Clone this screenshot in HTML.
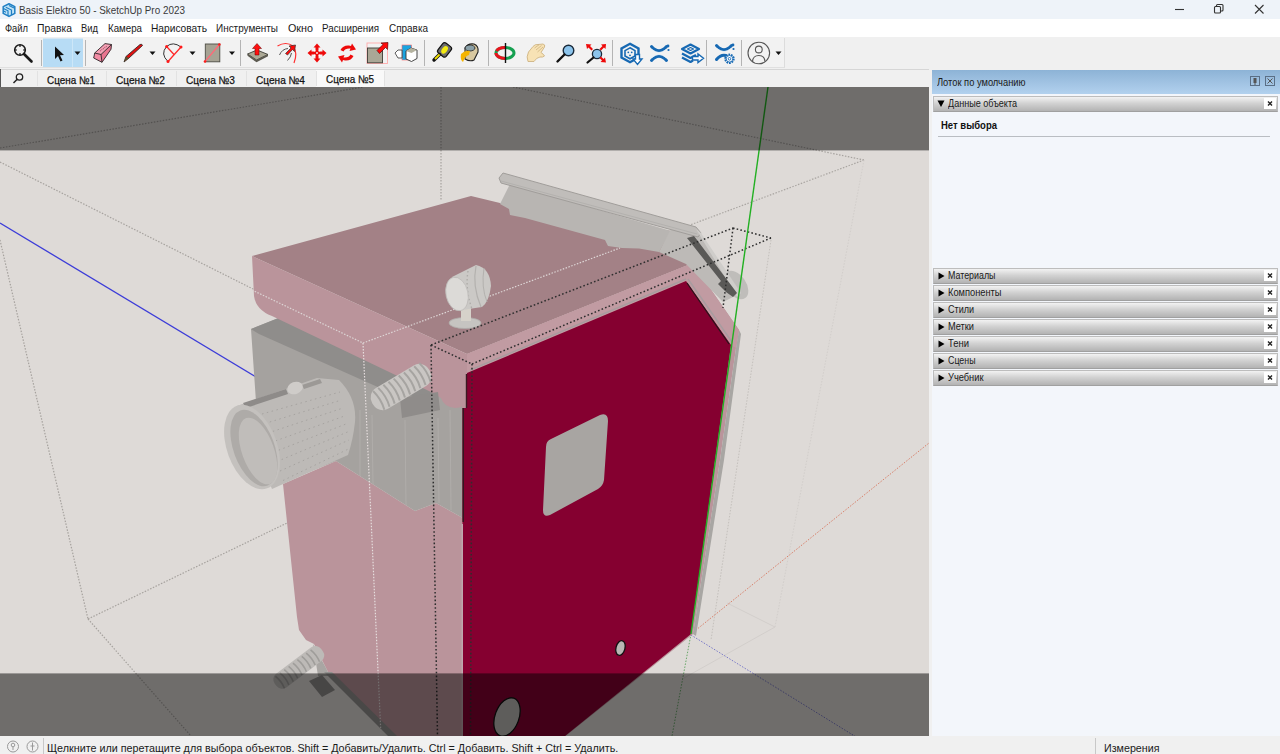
<!DOCTYPE html><html><head><meta charset="utf-8"><style>
*{box-sizing:border-box;margin:0;padding:0}
html,body{width:1280px;height:754px;overflow:hidden;background:#f0f0f0;font-family:"Liberation Sans",sans-serif;font-size:12px;color:#000;position:relative}
.a{position:absolute}
</style></head><body><div class="a" style="left:0;top:0;width:1280px;height:19px;background:#eef3f9"></div><div style="position:absolute;left:19px;top:4.69px;font-size:11px;line-height:11px;white-space:nowrap;color:#3a3a3a;font-weight:normal;transform-origin:0 0;transform:scaleX(0.8984);">Basis Elektro 50 - SketchUp Pro 2023</div><svg class="a" style="left:1140px;top:0" width="140" height="19"><g stroke="#333" stroke-width="1.1" fill="none"><line x1="35" y1="9.5" x2="44" y2="9.5"/><rect x="74.5" y="6.5" width="6" height="6.5" rx="1"/><path d="M76.5 6.5 V5.5 Q76.5 4.5 77.5 4.5 H82 Q83 4.5 83 5.5 V10 Q83 11 82 11 H80.5"/><path d="M115 5 L123.5 13.5 M123.5 5 L115 13.5"/></g></svg><svg class="a" style="left:1px;top:2px" width="16" height="16" viewBox="0 0 16 16"><path d="M8 1.8 L13.8 4.6 V11.4 L8 14.4 L2.2 11.4 V4.6 Z" fill="#bfe3f7" stroke="#1f7fc4" stroke-width="1.5" stroke-linejoin="round"/><path d="M2.5 6.5 L7 8.8 V14 M2.5 9 L5 10.3 M4.8 5.2 L10.5 8 V13 M8 3.5 L13 6" stroke="#1f7fc4" stroke-width="1.2" fill="none"/></svg><div class="a" style="left:0;top:19px;width:1280px;height:18px;background:#fff"></div><div style="position:absolute;left:5px;top:23.19px;font-size:11px;line-height:11px;white-space:nowrap;color:#1a1a1a;font-weight:normal;transform-origin:0 0;transform:scaleX(0.8504);">Файл</div><div style="position:absolute;left:37px;top:23.19px;font-size:11px;line-height:11px;white-space:nowrap;color:#1a1a1a;font-weight:normal;transform-origin:0 0;transform:scaleX(0.9416);">Правка</div><div style="position:absolute;left:81px;top:23.19px;font-size:11px;line-height:11px;white-space:nowrap;color:#1a1a1a;font-weight:normal;transform-origin:0 0;transform:scaleX(0.8540);">Вид</div><div style="position:absolute;left:108px;top:23.19px;font-size:11px;line-height:11px;white-space:nowrap;color:#1a1a1a;font-weight:normal;transform-origin:0 0;transform:scaleX(0.8838);">Камера</div><div style="position:absolute;left:151px;top:23.19px;font-size:11px;line-height:11px;white-space:nowrap;color:#1a1a1a;font-weight:normal;transform-origin:0 0;transform:scaleX(0.9263);">Нарисовать</div><div style="position:absolute;left:216px;top:23.19px;font-size:11px;line-height:11px;white-space:nowrap;color:#1a1a1a;font-weight:normal;transform-origin:0 0;transform:scaleX(0.9039);">Инструменты</div><div style="position:absolute;left:288px;top:23.19px;font-size:11px;line-height:11px;white-space:nowrap;color:#1a1a1a;font-weight:normal;transform-origin:0 0;transform:scaleX(0.9774);">Окно</div><div style="position:absolute;left:322px;top:23.19px;font-size:11px;line-height:11px;white-space:nowrap;color:#1a1a1a;font-weight:normal;transform-origin:0 0;transform:scaleX(0.8906);">Расширения</div><div style="position:absolute;left:389px;top:23.19px;font-size:11px;line-height:11px;white-space:nowrap;color:#1a1a1a;font-weight:normal;transform-origin:0 0;transform:scaleX(0.9037);">Справка</div><div class="a" style="left:0;top:37px;width:1280px;height:32px;background:#f0f0f0"></div><div class="a" style="left:0;top:38px;width:785px;height:30px;background:#f2f2f2;border-right:1px solid #dcdcdc;border-bottom:1px solid #e0e0e0"></div><div class="a" style="left:0;top:68.5px;width:1280px;height:1px;background:#d6d6d6"></div><div class="a" style="left:0;top:69.5px;width:930px;height:17.5px;background:#f0f0f0"></div><div class="a" style="left:0;top:69px;width:1px;height:18px;background:#555"></div><div class="a" style="left:316px;top:70px;width:68px;height:17px;background:#f9f9f9"></div><div class="a" style="left:37px;top:71px;width:1px;height:15px;background:#e2e2e2"></div><div class="a" style="left:106px;top:71px;width:1px;height:15px;background:#e2e2e2"></div><div class="a" style="left:176px;top:71px;width:1px;height:15px;background:#e2e2e2"></div><div class="a" style="left:246px;top:71px;width:1px;height:15px;background:#e2e2e2"></div><div class="a" style="left:316px;top:71px;width:1px;height:15px;background:#e2e2e2"></div><div class="a" style="left:384px;top:71px;width:1px;height:15px;background:#e2e2e2"></div><div style="position:absolute;left:47px;top:74.69px;font-size:11px;line-height:11px;white-space:nowrap;color:#111;font-weight:normal;transform-origin:0 0;transform:scaleX(0.8985);-webkit-text-stroke:0.25px #111;">Сцена №1</div><div style="position:absolute;left:116px;top:74.69px;font-size:11px;line-height:11px;white-space:nowrap;color:#111;font-weight:normal;transform-origin:0 0;transform:scaleX(0.9172);-webkit-text-stroke:0.25px #111;">Сцена №2</div><div style="position:absolute;left:186px;top:74.69px;font-size:11px;line-height:11px;white-space:nowrap;color:#111;font-weight:normal;transform-origin:0 0;transform:scaleX(0.9172);-webkit-text-stroke:0.25px #111;">Сцена №3</div><div style="position:absolute;left:256px;top:74.69px;font-size:11px;line-height:11px;white-space:nowrap;color:#111;font-weight:normal;transform-origin:0 0;transform:scaleX(0.9172);-webkit-text-stroke:0.25px #111;">Сцена №4</div><div style="position:absolute;left:326px;top:73.69px;font-size:11px;line-height:11px;white-space:nowrap;color:#111;font-weight:normal;transform-origin:0 0;transform:scaleX(0.8985);-webkit-text-stroke:0.25px #111;">Сцена №5</div><svg class="a" style="left:10px;top:72px" width="16" height="14"><circle cx="9.5" cy="5" r="3.2" stroke="#222" stroke-width="1.3" fill="none"/><line x1="7.2" y1="7.3" x2="3.5" y2="11" stroke="#222" stroke-width="1.5"/></svg><div class="a" style="left:0;top:87px;width:929px;height:649px;overflow:hidden;background:#dedad7"><svg width="929" height="649" viewBox="0 87 929 649" style="position:absolute;left:0;top:0"><line x1="0" y1="148" x2="363" y2="87" stroke="#a6a29e" stroke-width="1.2" stroke-dasharray="1.5,1.5" /><line x1="0" y1="162" x2="255" y2="290" stroke="#a6a29e" stroke-width="1.2" stroke-dasharray="1.5,1.5" /><line x1="0" y1="240" x2="88" y2="619" stroke="#a6a29e" stroke-width="1.2" stroke-dasharray="1.5,1.5" /><line x1="88" y1="619" x2="191" y2="736" stroke="#a6a29e" stroke-width="1.2" stroke-dasharray="1.5,1.5" /><line x1="88" y1="619" x2="287" y2="523" stroke="#a6a29e" stroke-width="1.2" stroke-dasharray="1.5,1.5" /><line x1="441" y1="87" x2="441" y2="200" stroke="#a6a29e" stroke-width="1.2" stroke-dasharray="1.5,1.5" /><line x1="513" y1="87" x2="864" y2="160" stroke="#a6a29e" stroke-width="1.2" stroke-dasharray="1.5,1.5" /><line x1="864" y1="160" x2="690" y2="225" stroke="#aaa6a2" stroke-width="1.2" stroke-dasharray="1.5,1.5" /><line x1="864" y1="160" x2="775" y2="627" stroke="#d2cecb" stroke-width="1" stroke-dasharray="1.5,1.5" /><line x1="775" y1="627" x2="684" y2="678" stroke="#d2cecb" stroke-width="1" /><line x1="727" y1="603" x2="775" y2="627" stroke="#d2cecb" stroke-width="1" /><line x1="771" y1="240" x2="711" y2="640" stroke="#c4c0bc" stroke-width="1" stroke-dasharray="1.5,1.5" /><line x1="0" y1="223" x2="256" y2="377" stroke="#3c3cd8" stroke-width="1.3" /><line x1="691" y1="634" x2="929" y2="443" stroke="#d8806a" stroke-width="1" stroke-dasharray="1.5,1.5" /><line x1="691" y1="635" x2="861" y2="740" stroke="#7a7ac8" stroke-width="1" stroke-dasharray="1.5,1.5" /><line x1="691" y1="634" x2="672" y2="736" stroke="#6aa86a" stroke-width="1" stroke-dasharray="1.5,1.5" /><polygon points="283,484 336,461 415,511 436,503 461,517 464,520 464,736 395,736 330,676 326,668 314,644 306,640 299,630 297,617 291,560" fill="#ba949b" /><polygon points="313,644 326,668 330,676 318,676" fill="#a9a6a3" /><g transform="rotate(-37 298 668)"><rect x="270" y="659.5" width="58" height="17" rx="7" fill="#bdbab7"/><path d="M275.0,661 q2,7.5 0,15" stroke="#9f9d9a" stroke-width="1.6" fill="none"/><path d="M280.5,661 q2,7.5 0,15" stroke="#9f9d9a" stroke-width="1.6" fill="none"/><path d="M286.0,661 q2,7.5 0,15" stroke="#9f9d9a" stroke-width="1.6" fill="none"/><path d="M291.5,661 q2,7.5 0,15" stroke="#9f9d9a" stroke-width="1.6" fill="none"/><path d="M297.0,661 q2,7.5 0,15" stroke="#9f9d9a" stroke-width="1.6" fill="none"/><path d="M302.5,661 q2,7.5 0,15" stroke="#9f9d9a" stroke-width="1.6" fill="none"/><path d="M308.0,661 q2,7.5 0,15" stroke="#9f9d9a" stroke-width="1.6" fill="none"/><path d="M313.5,661 q2,7.5 0,15" stroke="#9f9d9a" stroke-width="1.6" fill="none"/><path d="M319.0,661 q2,7.5 0,15" stroke="#9f9d9a" stroke-width="1.6" fill="none"/></g><polygon points="324,672 332,672 397,736 388,736" fill="#92908e" /><polygon points="309,681 322,675 335,690 322,697" fill="#8e8c8a" /><polygon points="251,329 281,317 440,380 464,380 464,522 461,517 436,503 415,511 336,461 284,482 256,402" fill="#a5a29f" /><line x1="360" y1="410" x2="360" y2="476" stroke="#b0adaa" stroke-width="1" /><line x1="372" y1="415" x2="373" y2="484" stroke="#b0adaa" stroke-width="1" /><line x1="405" y1="420" x2="406" y2="505" stroke="#b0adaa" stroke-width="1" /><line x1="438" y1="418" x2="439" y2="503" stroke="#b0adaa" stroke-width="1" /><line x1="450" y1="410" x2="451" y2="510" stroke="#b0adaa" stroke-width="1" /><polygon points="251,329 281,317 437,386 437,402 380,388 259,334" fill="#8f8d8b" /><g><path d="M237,406 L317,378 L339,380 Q357,398 355,422 Q353,440 348,455 L272,489 Z" fill="#bdbab7"/><line x1="262" y1="414.0" x2="340.0" y2="392" stroke="#a6a3a0" stroke-width="1" stroke-dasharray="1.5,3.5"/><line x1="265" y1="423.5" x2="341.5" y2="400" stroke="#a6a3a0" stroke-width="1" stroke-dasharray="1.5,3.5"/><line x1="268" y1="433.0" x2="343.0" y2="408" stroke="#a6a3a0" stroke-width="1" stroke-dasharray="1.5,3.5"/><line x1="271" y1="442.5" x2="344.5" y2="416" stroke="#a6a3a0" stroke-width="1" stroke-dasharray="1.5,3.5"/><line x1="274" y1="452.0" x2="346.0" y2="424" stroke="#a6a3a0" stroke-width="1" stroke-dasharray="1.5,3.5"/><line x1="277" y1="461.5" x2="347.5" y2="432" stroke="#a6a3a0" stroke-width="1" stroke-dasharray="1.5,3.5"/><line x1="280" y1="471.0" x2="349.0" y2="440" stroke="#a6a3a0" stroke-width="1" stroke-dasharray="1.5,3.5"/><line x1="283" y1="480.5" x2="350.5" y2="448" stroke="#a6a3a0" stroke-width="1" stroke-dasharray="1.5,3.5"/><path d="M243,403 L286,389 L288,394 L246,408 Z" fill="#8e8b89"/><path d="M302,385 L320,379 L322,383 L304,389 Z" fill="#9c9996"/><ellipse cx="295" cy="388" rx="8" ry="6" fill="#cfccc9" transform="rotate(-20 295 388)"/><ellipse cx="252" cy="447" rx="25" ry="44" fill="#c4c1be" transform="rotate(-20 252 447)"/><ellipse cx="254" cy="448" rx="20.5" ry="40" fill="#aeaba8" transform="rotate(-20 254 448)"/><ellipse cx="258" cy="451" rx="16" ry="35" fill="#c0bdba" transform="rotate(-20 258 451)"/></g><polygon points="252,256 471,196 500,203 671,231 688,265 467,354" fill="#a38186" /><path d="M252,256 L467,354 L467,398 Q465,408 455,408 Q444,407 441,398 L431,392 L272,316 Q256,310 254,296 Z" fill="#ba949b" /><polygon points="400,398 438,392 440,410 402,418" fill="#8f8c8a" /><g transform="rotate(-31 401 387)"><rect x="368" y="375" width="66" height="24" rx="11" fill="#c9c6c3"/><path d="M375,376 q3,11 0,22" stroke="#a6a4a1" stroke-width="2" fill="none"/><path d="M381,376 q3,11 0,22" stroke="#a6a4a1" stroke-width="2" fill="none"/><path d="M387,376 q3,11 0,22" stroke="#a6a4a1" stroke-width="2" fill="none"/><path d="M393,376 q3,11 0,22" stroke="#a6a4a1" stroke-width="2" fill="none"/><path d="M399,376 q3,11 0,22" stroke="#a6a4a1" stroke-width="2" fill="none"/><path d="M405,376 q3,11 0,22" stroke="#a6a4a1" stroke-width="2" fill="none"/><path d="M411,376 q3,11 0,22" stroke="#a6a4a1" stroke-width="2" fill="none"/><path d="M417,376 q3,11 0,22" stroke="#a6a4a1" stroke-width="2" fill="none"/><path d="M423,376 q3,11 0,22" stroke="#a6a4a1" stroke-width="2" fill="none"/><path d="M429,376 q3,11 0,22" stroke="#a6a4a1" stroke-width="2" fill="none"/></g><polygon points="467,354 688,265 696,268 739,330 736,348 720,460 693,634 565,736.5 462,737 462,370" fill="#ba949b" /><polygon points="467,354 688,265 696,268 739,330 736,348 731,345 686,281 467,373" fill="#c19ba2" /><line x1="470" y1="370" x2="686" y2="279" stroke="#a89c9f" stroke-width="1.4" /><line x1="688" y1="279" x2="732" y2="342" stroke="#a89c9f" stroke-width="1.4" /><polygon points="739,330 741,334 724,460 696,636 693,634 720,460 736,348" fill="#a8a6a3" /><polygon points="467,373 686,281 731,345 691,634 565,736 462.5,736 462.5,408 467,408" fill="#850030" /><line x1="466.5" y1="374" x2="466.5" y2="408" stroke="#3a1a22" stroke-width="1.4" /><line x1="463.2" y1="408" x2="463.2" y2="522" stroke="#2a1a1e" stroke-width="1.4" /><line x1="462.3" y1="524" x2="462.3" y2="736" stroke="#c9bfc0" stroke-width="1" /><line x1="687" y1="283" x2="729" y2="344" stroke="#2a141a" stroke-width="1.3" /><path d="M551,439 L600,415 Q608,412 608,421 L604,480 Q603,486 598,489 L550,515 Q543,518 543,510 L546,447 Q546,441 551,439 Z" fill="#a8a5a2" /><ellipse cx="620.5" cy="648" rx="4.5" ry="7.5" fill="#b9b7b4" stroke="#111" stroke-width="1.3" transform="rotate(15 620.5 648)"/><ellipse cx="507" cy="717" rx="12" ry="20" fill="#bcbab7" stroke="#111" stroke-width="1.3" transform="rotate(20 507 717)"/><polygon points="510,184 671,231 659,252 639,248.5 622,248 608,246 605,240 525,218 510,215 509,209 500,204" fill="#b8b5b2" /><polygon points="671,229 698,231 739,294 723,302 686,264 659,252" fill="#bdbab7" /><polygon points="499,178 503,173 696,227 701,233 698,237 501,183" fill="#c0bdba" stroke="#a09d9a" stroke-width="1"/><line x1="501" y1="181" x2="697" y2="234" stroke="#b3b1ae" stroke-width="1" /><ellipse cx="736" cy="285" rx="10" ry="16" fill="#bfbdba" transform="rotate(-35 736 285)"/><polygon points="696,229 701,233 741,293 737,297" fill="#cfcdca" /><polygon points="687,238 694,236 737,293 733,297 726,292 718,284 721,281" fill="#5a5957" /><line x1="363" y1="343" x2="381" y2="736" stroke="#e6dede" stroke-width="1.2" stroke-dasharray="1.5,1.5" /><line x1="252" y1="290" x2="363" y2="343" stroke="#ddd5d5" stroke-width="1.2" stroke-dasharray="1.5,1.5" /><line x1="363" y1="343" x2="620" y2="248" stroke="#ddd5d5" stroke-width="1.2" stroke-dasharray="1.5,1.5" /><ellipse cx="465" cy="323" rx="16" ry="5.5" fill="#c6c4c1" stroke="#aeaca9" stroke-width="0.8"/><rect x="461" y="304" width="10" height="17" fill="#d6d2ca"/><path d="M452,277 L476,265 Q490,268 491,286 Q489,302 482,307 L462,310 Z" fill="#cbc9c6"/><path d="M476,266 Q472,286 481,307" stroke="#b3b1ae" stroke-width="1.2" fill="none"/><path d="M484,268 Q481,287 487,302" stroke="#b3b1ae" stroke-width="1" fill="none"/><path d="M468,271 Q465,289 472,309" stroke="#aeaca9" stroke-width="1.4" fill="none" stroke-dasharray="1.5,2.5"/><ellipse cx="457" cy="294" rx="11" ry="17" fill="#dcdad7" stroke="#bdbbb8" stroke-width="0.8" transform="rotate(-12 457 294)"/><line x1="431" y1="345" x2="733" y2="228" stroke="#2e2e2e" stroke-width="1.5" stroke-dasharray="1.6,2.2" /><line x1="472" y1="364" x2="771" y2="238" stroke="#2e2e2e" stroke-width="1.5" stroke-dasharray="1.6,2.2" /><line x1="431" y1="345" x2="472" y2="364" stroke="#2e2e2e" stroke-width="1.5" stroke-dasharray="1.6,2.2" /><line x1="733" y1="228" x2="771" y2="238" stroke="#2e2e2e" stroke-width="1.5" stroke-dasharray="1.6,2.2" /><line x1="733" y1="228" x2="723" y2="308" stroke="#2e2e2e" stroke-width="1.5" stroke-dasharray="1.6,2.2" /><line x1="431" y1="345" x2="437.5" y2="736" stroke="#2e2e2e" stroke-width="1.5" stroke-dasharray="1.6,2.2" /><line x1="472" y1="364" x2="470.5" y2="736" stroke="#2e2e2e" stroke-width="1.5" stroke-dasharray="1.6,2.2" /><line x1="768" y1="87" x2="691" y2="634" stroke="#22b022" stroke-width="1.4" /><rect x="0" y="87" width="929" height="63.4" fill="#000" fill-opacity="0.5"/><rect x="0" y="673.4" width="929" height="62.6" fill="#000" fill-opacity="0.5"/></svg></div><div class="a" style="left:929px;top:69px;width:351px;height:667px;background:#f0f0f0"></div><div class="a" style="left:932px;top:70px;width:348px;height:666px;background:#f3f6fb"></div><div class="a" style="left:932px;top:70px;width:348px;height:24px;background:linear-gradient(#8db3d6,#b2d1ee)"></div><div style="position:absolute;left:937px;top:77.53px;font-size:10px;line-height:10px;white-space:nowrap;color:#1a1a1a;font-weight:normal;transform-origin:0 0;transform:scaleX(0.9320);">Лоток по умолчанию</div><svg class="a" style="left:1249px;top:75px" width="31" height="14"><g fill="none" stroke="#5a6f86" stroke-width="1"><rect x="1.5" y="1.5" width="9" height="9"/><rect x="16.5" y="1.5" width="9" height="9"/></g><rect x="4.5" y="3" width="3" height="5" fill="#555"/><line x1="6" y1="8" x2="6" y2="10" stroke="#555"/><path d="M18.5 3.5 L23.5 8.5 M23.5 3.5 L18.5 8.5" stroke="#555" stroke-width="1"/></svg><div class="a" style="left:933px;top:96px;width:345px;height:16px;background:linear-gradient(#f2f2f2,#d2d2d2 45%,#b3b3b3);border:1px solid #bdbdbd;border-bottom-color:#a0a0a0"></div><svg class="a" style="left:937px;top:100px" width="9" height="8"><path d="M0.5 0.5 H7.5 L4 7 Z" fill="#000"/></svg><div style="position:absolute;left:948px;top:99.03px;font-size:10px;line-height:10px;white-space:nowrap;color:#1a1a1a;font-weight:normal;transform-origin:0 0;transform:scaleX(0.9057);">Данные объекта</div><div class="a" style="left:1264px;top:98px;width:12px;height:11px;background:#fff"></div><svg class="a" style="left:1264px;top:98px" width="12" height="11"><path d="M4 3.5 L8 7.5 M8 3.5 L4 7.5" stroke="#222" stroke-width="1.4"/></svg><div style="position:absolute;left:941px;top:121.03px;font-size:10px;line-height:10px;white-space:nowrap;color:#111;font-weight:bold;transform-origin:0 0;transform:scaleX(0.9497);">Нет выбора</div><div class="a" style="left:938px;top:136px;width:332px;height:1px;background:#b9bdc2"></div><div class="a" style="left:933px;top:268px;width:345px;height:16px;background:linear-gradient(#f2f2f2,#d2d2d2 45%,#b3b3b3);border:1px solid #bdbdbd;border-bottom-color:#a0a0a0"></div><svg class="a" style="left:938px;top:272px" width="8" height="9"><path d="M0.5 0.5 L6.5 4 L0.5 7.5 Z" fill="#000"/></svg><div style="position:absolute;left:948px;top:271.04px;font-size:10px;line-height:10px;white-space:nowrap;color:#1a1a1a;font-weight:normal;transform-origin:0 0;transform:scaleX(0.8871);">Материалы</div><div class="a" style="left:1264px;top:270px;width:12px;height:11px;background:#fff"></div><svg class="a" style="left:1264px;top:270px" width="12" height="11"><path d="M4 3.5 L8 7.5 M8 3.5 L4 7.5" stroke="#222" stroke-width="1.4"/></svg><div class="a" style="left:933px;top:285px;width:345px;height:16px;background:linear-gradient(#f2f2f2,#d2d2d2 45%,#b3b3b3);border:1px solid #bdbdbd;border-bottom-color:#a0a0a0"></div><svg class="a" style="left:938px;top:289px" width="8" height="9"><path d="M0.5 0.5 L6.5 4 L0.5 7.5 Z" fill="#000"/></svg><div style="position:absolute;left:948px;top:288.04px;font-size:10px;line-height:10px;white-space:nowrap;color:#1a1a1a;font-weight:normal;transform-origin:0 0;transform:scaleX(0.9287);">Компоненты</div><div class="a" style="left:1264px;top:287px;width:12px;height:11px;background:#fff"></div><svg class="a" style="left:1264px;top:287px" width="12" height="11"><path d="M4 3.5 L8 7.5 M8 3.5 L4 7.5" stroke="#222" stroke-width="1.4"/></svg><div class="a" style="left:933px;top:302px;width:345px;height:16px;background:linear-gradient(#f2f2f2,#d2d2d2 45%,#b3b3b3);border:1px solid #bdbdbd;border-bottom-color:#a0a0a0"></div><svg class="a" style="left:938px;top:306px" width="8" height="9"><path d="M0.5 0.5 L6.5 4 L0.5 7.5 Z" fill="#000"/></svg><div style="position:absolute;left:948px;top:305.04px;font-size:10px;line-height:10px;white-space:nowrap;color:#1a1a1a;font-weight:normal;transform-origin:0 0;transform:scaleX(0.9024);">Стили</div><div class="a" style="left:1264px;top:304px;width:12px;height:11px;background:#fff"></div><svg class="a" style="left:1264px;top:304px" width="12" height="11"><path d="M4 3.5 L8 7.5 M8 3.5 L4 7.5" stroke="#222" stroke-width="1.4"/></svg><div class="a" style="left:933px;top:319px;width:345px;height:16px;background:linear-gradient(#f2f2f2,#d2d2d2 45%,#b3b3b3);border:1px solid #bdbdbd;border-bottom-color:#a0a0a0"></div><svg class="a" style="left:938px;top:323px" width="8" height="9"><path d="M0.5 0.5 L6.5 4 L0.5 7.5 Z" fill="#000"/></svg><div style="position:absolute;left:948px;top:322.04px;font-size:10px;line-height:10px;white-space:nowrap;color:#1a1a1a;font-weight:normal;transform-origin:0 0;transform:scaleX(0.9214);">Метки</div><div class="a" style="left:1264px;top:321px;width:12px;height:11px;background:#fff"></div><svg class="a" style="left:1264px;top:321px" width="12" height="11"><path d="M4 3.5 L8 7.5 M8 3.5 L4 7.5" stroke="#222" stroke-width="1.4"/></svg><div class="a" style="left:933px;top:336px;width:345px;height:16px;background:linear-gradient(#f2f2f2,#d2d2d2 45%,#b3b3b3);border:1px solid #bdbdbd;border-bottom-color:#a0a0a0"></div><svg class="a" style="left:938px;top:340px" width="8" height="9"><path d="M0.5 0.5 L6.5 4 L0.5 7.5 Z" fill="#000"/></svg><div style="position:absolute;left:948px;top:339.04px;font-size:10px;line-height:10px;white-space:nowrap;color:#1a1a1a;font-weight:normal;transform-origin:0 0;transform:scaleX(0.9451);">Тени</div><div class="a" style="left:1264px;top:338px;width:12px;height:11px;background:#fff"></div><svg class="a" style="left:1264px;top:338px" width="12" height="11"><path d="M4 3.5 L8 7.5 M8 3.5 L4 7.5" stroke="#222" stroke-width="1.4"/></svg><div class="a" style="left:933px;top:353px;width:345px;height:16px;background:linear-gradient(#f2f2f2,#d2d2d2 45%,#b3b3b3);border:1px solid #bdbdbd;border-bottom-color:#a0a0a0"></div><svg class="a" style="left:938px;top:357px" width="8" height="9"><path d="M0.5 0.5 L6.5 4 L0.5 7.5 Z" fill="#000"/></svg><div style="position:absolute;left:948px;top:356.04px;font-size:10px;line-height:10px;white-space:nowrap;color:#1a1a1a;font-weight:normal;transform-origin:0 0;transform:scaleX(0.8840);">Сцены</div><div class="a" style="left:1264px;top:355px;width:12px;height:11px;background:#fff"></div><svg class="a" style="left:1264px;top:355px" width="12" height="11"><path d="M4 3.5 L8 7.5 M8 3.5 L4 7.5" stroke="#222" stroke-width="1.4"/></svg><div class="a" style="left:933px;top:370px;width:345px;height:16px;background:linear-gradient(#f2f2f2,#d2d2d2 45%,#b3b3b3);border:1px solid #bdbdbd;border-bottom-color:#a0a0a0"></div><svg class="a" style="left:938px;top:374px" width="8" height="9"><path d="M0.5 0.5 L6.5 4 L0.5 7.5 Z" fill="#000"/></svg><div style="position:absolute;left:948px;top:373.04px;font-size:10px;line-height:10px;white-space:nowrap;color:#1a1a1a;font-weight:normal;transform-origin:0 0;transform:scaleX(0.9285);">Учебник</div><div class="a" style="left:1264px;top:372px;width:12px;height:11px;background:#fff"></div><svg class="a" style="left:1264px;top:372px" width="12" height="11"><path d="M4 3.5 L8 7.5 M8 3.5 L4 7.5" stroke="#222" stroke-width="1.4"/></svg><div class="a" style="left:0;top:736px;width:1280px;height:18px;background:#f0f0f0"></div><div class="a" style="left:43px;top:738px;width:1px;height:16px;background:#c8c8c8"></div><div class="a" style="left:1095px;top:738px;width:1px;height:16px;background:#c8c8c8"></div><div style="position:absolute;left:47px;top:743.19px;font-size:11px;line-height:11px;white-space:nowrap;color:#1a1a1a;font-weight:normal;transform-origin:0 0;transform:scaleX(0.9785);">Щелкните или перетащите для выбора объектов. Shift = Добавить/Удалить. Ctrl = Добавить. Shift + Ctrl = Удалить.</div><div style="position:absolute;left:1104px;top:743.19px;font-size:11px;line-height:11px;white-space:nowrap;color:#1a1a1a;font-weight:normal;transform-origin:0 0;transform:scaleX(0.9726);">Измерения</div><svg class="a" style="left:3px;top:739px" width="40" height="15"><g fill="none" stroke="#999" stroke-width="1"><circle cx="10" cy="7.5" r="5.5"/><circle cx="29.5" cy="7.5" r="5.5"/></g><circle cx="10" cy="6" r="1.8" fill="none" stroke="#999"/><line x1="10" y1="8" x2="10" y2="11" stroke="#999"/><line x1="29.5" y1="3.5" x2="29.5" y2="11.5" stroke="#999"/><line x1="27.5" y1="7" x2="31.5" y2="7" stroke="#999"/></svg><svg class="a" style="left:0;top:37px" width="800" height="32" viewBox="0 37 800 32"><rect x="43" y="38.5" width="40" height="28.5" fill="#b7dcf5"/><line x1="72.5" y1="39" x2="72.5" y2="67" stroke="#cde7f8" stroke-width="1"/><line x1="41.5" y1="40" x2="41.5" y2="66" stroke="#b4b4b4" stroke-width="1"/><line x1="85.5" y1="40" x2="85.5" y2="66" stroke="#b4b4b4" stroke-width="1"/><line x1="240.5" y1="40" x2="240.5" y2="66" stroke="#b4b4b4" stroke-width="1"/><line x1="424.5" y1="40" x2="424.5" y2="66" stroke="#b4b4b4" stroke-width="1"/><line x1="488.5" y1="40" x2="488.5" y2="66" stroke="#b4b4b4" stroke-width="1"/><line x1="612.5" y1="40" x2="612.5" y2="66" stroke="#b4b4b4" stroke-width="1"/><line x1="706.5" y1="40" x2="706.5" y2="66" stroke="#b4b4b4" stroke-width="1"/><line x1="741.5" y1="40" x2="741.5" y2="66" stroke="#b4b4b4" stroke-width="1"/><g fill="none" stroke="#1a1a1a"><circle cx="20" cy="50" r="5.3" stroke-width="1.6"/><line x1="24" y1="54" x2="31.5" y2="61.5" stroke-width="2.6" stroke-linecap="round"/><path d="M20,44.7 V47 M20,53 V55.3 M14.7,50 H17 M23,50 H25.3" stroke-width="1.2"/></g><path d="M55,46.5 L55,59 L58,56 L60.5,61.5 L62.5,60.5 L60,55.3 L64,55 Z" fill="#111"/><path d="M74.5,51.5 H80.5 L77.5,55 Z" fill="#111"/><path d="M94.7,53 L105,43.6 L111.5,44.5 L101,54.5 Z" fill="#f6a2b6"/><path d="M101,54.5 L111.5,44.5 L111,49.2 L102,62.3 Z" fill="#e9748f"/><path d="M94.7,53 L101,54.5 L102,62.3 L93.7,58 Z" fill="#f28ca4"/><path d="M94.7,53 L105,43.6 L111.5,44.5 L111,49.2 L102,62.3 L93.7,58 Z M94.7,53 L101,54.5 L111.5,44.5 M101,54.5 L102,62.3" fill="none" stroke="#2e2226" stroke-width="0.9" stroke-linejoin="round"/><path d="M100,51 L107,46" stroke="#b05a70" stroke-width="1.2" stroke-dasharray="1,0.8"/><path d="M124,62 L126,56.5 L140,44.5 Q142,43.5 142.5,45.5 L129,58 Z" fill="#e01010" stroke="#222" stroke-width="0.8"/><path d="M124,62 L126,56.5 L129,58 Z" fill="#5a5030"/><path d="M149.5,51.5 H155.5 L152.5,55 Z" fill="#111"/><path d="M168,61.5 Q160,54 166.6,46.5 Q173,41 181,47" fill="none" stroke="#333" stroke-width="1"/><path d="M166.6,46.5 L174,54.5 M181,47 L168,61.5" stroke="#ff2a2a" stroke-width="1.3"/><circle cx="166.6" cy="46.5" r="1.5" fill="#ff1a1a"/><circle cx="181" cy="47" r="1.5" fill="#ff1a1a"/><circle cx="168" cy="61.5" r="1.5" fill="#ff1a1a"/><path d="M189.5,51.5 H195.5 L192.5,55 Z" fill="#111"/><rect x="205.3" y="44" width="14.5" height="17.8" fill="#a6a394" stroke="#4d4d45" stroke-width="0.9"/><line x1="205" y1="61.5" x2="219.4" y2="44.5" stroke="#ff6a78" stroke-width="1.3"/><circle cx="205" cy="61.5" r="1.3" fill="#ff1a1a"/><circle cx="219.4" cy="44.5" r="1.3" fill="#ff1a1a"/><path d="M229,51.5 H235 L232,55 Z" fill="#111"/><path d="M247.5,54 L257,50 L268,54.5 L256.5,60 Z" fill="#aca996" stroke="#3d3d35" stroke-width="0.9"/><path d="M247.5,54 L247.5,55.8 L256.5,62.3 L268,56.3 L268,54.5 L256.5,60 Z" fill="#5c5a50"/><path d="M255,55 V48.5 H252.5 L257,43.5 L261.5,48.5 H259 V55 Z" fill="#ff1010" stroke="#600" stroke-width="0.5"/><path d="M277.5,46 Q286,41 293,46 Q298,53 294,63" fill="none" stroke="#ff3030" stroke-width="1.2"/><path d="M279.5,55 Q282,49 288,48.5 M287.5,60.5 Q291,57 291.5,53" fill="none" stroke="#555" stroke-width="1"/><path d="M285.5,53.5 L291,48 L289,46 L295.5,45 L294.5,51.5 L292.5,49.5 L287.5,55 Z" fill="#ff0a0a" stroke="#333" stroke-width="0.7"/><path d="M317,43.5 L320.5,47.5 H318.5 V51.5 H322.5 V49.5 L326.5,53 L322.5,56.5 V54.5 H318.5 V58.5 H320.5 L317,62.5 L313.5,58.5 H315.5 V54.5 H311.5 V56.5 L307.5,53 L311.5,49.5 V51.5 H315.5 V47.5 H313.5 Z" fill="#ee0a0a"/><g fill="#fff"><circle cx="314.5" cy="50.5" r="0.9"/><circle cx="319.5" cy="50.5" r="0.9"/><circle cx="314.5" cy="55.5" r="0.9"/><circle cx="319.5" cy="55.5" r="0.9"/><circle cx="317" cy="53" r="0.9"/></g><path d="M340.5,50 Q343,45 349,45.5 L351,46 L352,43.5 L356,49.5 L349.5,51 L350.5,48.5 Q345,48 343.5,51.5 Z" fill="#ee0a0a"/><path d="M353.5,56 Q351,61 345,60.5 L343,60 L342,62.5 L338,56.5 L344.5,55 L343.5,57.5 Q349,58 350.5,54.5 Z" fill="#ee0a0a"/><rect x="367" y="43" width="20.5" height="20.5" fill="none" stroke="#ffaaaa" stroke-width="0.9"/><rect x="367.5" y="48" width="15" height="14.8" fill="#aaa796" stroke="#3d3d35" stroke-width="0.9"/><path d="M377,50.5 L383,44.5 L381,43 L388,42.5 L387.5,49.5 L385.5,47.5 L379.5,53.5 Z" fill="#ff0a0a" stroke="#400" stroke-width="0.6"/><rect x="402" y="45" width="9.5" height="15" fill="#1aa4e0" stroke="#f66" stroke-width="0.6"/><path d="M395,53 L398,50 L402,50 L402,58 L398,58 Z" fill="#fff" stroke="#333" stroke-width="0.8"/><path d="M406,51 L411,48 L417,50 L417,58.5 L411.5,61.5 L406,59 Z" fill="#fff" stroke="#333" stroke-width="0.9"/><path d="M406,51 L411,48 L417,50 L411.5,53 Z" fill="#b5b3a0"/><g transform="rotate(38 444.5 49.5)"><rect x="439.5" y="43.5" width="10.5" height="12.5" rx="2.5" fill="#6e6e6e" stroke="#111" stroke-width="1.2"/><ellipse cx="444.8" cy="49.7" rx="2.6" ry="4.2" fill="#f3ea10"/></g><path d="M439.5,54.5 L434,60" stroke="#111" stroke-width="3.4" stroke-linecap="round"/><path d="M439.5,54.5 L435,59" stroke="#f0e000" stroke-width="1.8"/><path d="M465,48 Q468,43 474,44 Q479,46 478,52 L474,60 Q470,62 465,59 Z" fill="#d8c8a0" stroke="#222" stroke-width="1.1"/><ellipse cx="470" cy="48" rx="5" ry="3" fill="#8aa0a8" stroke="#222" stroke-width="0.8"/><path d="M470,51 Q465,50 461,54 Q460,60 463,62 Q465,56 469,55 Z" fill="#f5b400"/><ellipse cx="505" cy="53" rx="9" ry="5.5" fill="none" stroke="#16a050" stroke-width="3"/><path d="M496,53 A9,5.5 0 0 0 505,58.5" fill="none" stroke="#e8141e" stroke-width="3"/><path d="M496.5,51 A9,5.5 0 0 1 505,47.5" fill="none" stroke="#e8141e" stroke-width="3"/><line x1="505.5" y1="43" x2="505.5" y2="63" stroke="#111" stroke-width="1.4"/><path d="M528,61.5 Q526,57 528.5,52 L533,46.5 Q535,44 538,44.5 L543,44 Q545.5,44.5 544.5,47 L541,52.5 Q543.5,54 544.5,56 Q543,57.5 540,57 Q536.5,57.5 534,61.5 Z" fill="#f7e2b5" stroke="#c9ad7a" stroke-width="0.8"/><path d="M534.5,48 L539,44.8 M536,50 L541.5,45.5 M537.5,52 L543,47" stroke="#c9ad7a" stroke-width="0.7" fill="none"/><circle cx="568.5" cy="50.5" r="5.3" fill="#8cc4ec" stroke="#1a2a3a" stroke-width="1.4"/><line x1="564.5" y1="54.5" x2="557.5" y2="61.5" stroke="#111" stroke-width="2.4" stroke-linecap="round"/><circle cx="597" cy="54" r="4.6" fill="#8cc4ec" stroke="#1a2a3a" stroke-width="1.3"/><line x1="593.5" y1="57.5" x2="587.5" y2="62.5" stroke="#111" stroke-width="2.2" stroke-linecap="round"/><path d="M586,44 L591.5,44.5 L590,46 L593,49 L591.5,50.5 L588.5,47.5 L587,49 Z" fill="#ee0a0a"/><path d="M606,44 L605.5,49 L604,47.5 L601,50.5 L599.5,49 L602.5,46 L601,44.5 Z" fill="#ee0a0a"/><path d="M606,62.5 L600.5,62 L602,60.5 L599.5,58 L601,56.5 L603.5,59 L605,57.5 Z" fill="#ee0a0a"/><g fill="none" stroke="#1769b3"><path d="M630,43.8 L638.5,48.5 L638.5,57.5 L630,62.2 L621.5,57.5 L621.5,48.5 Z" stroke-width="2.4"/><path d="M630,47.8 L635,50.6 L635,56 L630,58.8 L625,56 L625,50.6 Z" stroke-width="1.6"/></g><g fill="#1769b3"><circle cx="628.3" cy="52.3" r="0.9"/><circle cx="631.7" cy="52.3" r="0.9"/><circle cx="630" cy="55.3" r="0.9"/></g><path d="M635.5,54.5 H639.5 V59 H642 L637.5,64.5 L633,59 H635.5 Z" fill="#fff" stroke="#1769b3" stroke-width="1.4"/><g fill="none" stroke="#1769b3" stroke-linecap="round"><path d="M651.5,46.5 Q659,55 666.5,46.5" stroke-width="3"/><path d="M651.5,60.5 Q659,52 666.5,60.5" stroke-width="3"/></g><g fill="none" stroke="#eaf2fa" stroke-width="0.8"><path d="M652,49.5 Q659,55.5 666,49.5"/><path d="M652,57.5 Q659,51.5 666,57.5"/></g><circle cx="668" cy="46" r="1.4" fill="#1769b3"/><circle cx="668.5" cy="50" r="1.1" fill="#1769b3"/><g fill="none" stroke="#1769b3" stroke-linejoin="round"><path d="M682,49 L690.5,44.5 L699,49 L690.5,53.5 Z" stroke-width="2.2"/><path d="M687.5,49 L690.5,47.5 L693.5,49 L690.5,50.5 Z" stroke-width="1.2"/><path d="M682,53.5 L690.5,58 L696,55" stroke-width="2.2"/><path d="M682,57.5 L690.5,62 L693,60.5" stroke-width="2.2"/></g><path d="M692.5,56.5 H698 V54 L703.5,58.3 L698,62.5 V60 H692.5 Z" fill="#fff" stroke="#1769b3" stroke-width="1.4"/><g fill="none" stroke="#1769b3" stroke-linecap="round"><path d="M716.5,45.5 Q724,54 731.5,45.5" stroke-width="3"/><path d="M716.5,59.5 Q721,54 726,55.5" stroke-width="3"/></g><g fill="none" stroke="#eaf2fa" stroke-width="0.8"><path d="M717,48.5 Q724,54.5 731,48.5"/></g><circle cx="733" cy="45" r="1.4" fill="#1769b3"/><circle cx="733.5" cy="49" r="1.1" fill="#1769b3"/><circle cx="729.5" cy="58.8" r="4.2" fill="#fff" stroke="#1769b3" stroke-width="2" stroke-dasharray="1.7,0.9"/><circle cx="729.5" cy="58.8" r="3.3" fill="#fff" stroke="#1769b3" stroke-width="0.9"/><circle cx="729.5" cy="58.8" r="1.3" fill="none" stroke="#1769b3" stroke-width="0.9"/><circle cx="758.8" cy="53" r="10.8" fill="none" stroke="#555" stroke-width="1.1"/><circle cx="758.8" cy="49.5" r="3.4" fill="none" stroke="#555" stroke-width="1.1"/><path d="M752.5,61.5 Q753,55.5 758.8,55.5 Q764.5,55.5 765,61.5" fill="none" stroke="#555" stroke-width="1.1"/><path d="M775.5,51.5 H781.5 L778.5,55 Z" fill="#111"/></svg></body></html>
